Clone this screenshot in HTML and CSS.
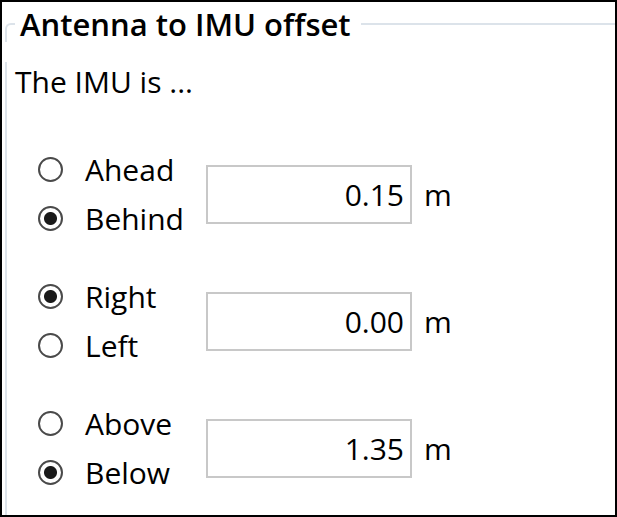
FILE: index.html
```html
<!doctype html>
<html lang="en">
    <head>
        <meta charset="UTF-8" />
        <title>Antenna to IMU offset</title>
        <link rel="stylesheet" href="styles.css">
    </head>
    <body>
        <div class="window">
            <div class="group">
                <div class="group-head">
                    <span class="group-title">Antenna to IMU offset</span>
                </div>
                <div class="group-body">
                    <div class="intro">The IMU is ...</div>

                    <div class="axis">
                        <div class="choices">
                            <label class="choice"><input type="radio" name="x" /> Ahead</label>
                            <label class="choice"><input type="radio" name="x" checked /> Behind</label>
                        </div>
                        <input class="value" type="text" value="0.15" />
                        <span class="unit">m</span>
                    </div>

                    <div class="axis">
                        <div class="choices">
                            <label class="choice"><input type="radio" name="y" checked /> Right</label>
                            <label class="choice"><input type="radio" name="y" /> Left</label>
                        </div>
                        <input class="value" type="text" value="0.00" />
                        <span class="unit">m</span>
                    </div>

                    <div class="axis">
                        <div class="choices">
                            <label class="choice"><input type="radio" name="z" /> Above</label>
                            <label class="choice"><input type="radio" name="z" checked /> Below</label>
                        </div>
                        <input class="value" type="text" value="1.35" />
                        <span class="unit">m</span>
                    </div>
                </div>
            </div>
        </div>
    </body>
</html>
```

FILE: styles.css
```css
html,
body {
    margin: 0;
    height: 100%;
    overflow: hidden;
}
body {
    font-family: "Open Sans", "Noto Sans", sans-serif;
    color: #000;
}
.window {
    height: 100%;
    box-sizing: border-box;
    border: 2px solid #000;
    background: #fff;
    overflow: hidden;
}
.group {
    margin: 4px 0 0 3px;
}
.group-head {
    display: flex;
    height: 36px;
}
.group-head::before {
    content: "";
    width: 8px;
    margin-top: 17px;
    border-top: 2px solid #dce3ea;
    border-left: 2px solid #dce3ea;
    border-top-left-radius: 6px;
}
.group-head::after {
    content: "";
    flex: 1;
    margin-top: 17px;
    border-top: 2px solid #dce3ea;
}
.group-title {
    padding: 0 10px 0 5px;
    font-size: 31px;
    font-weight: 600;
    line-height: 36px;
}
.group-body {
    border-left: 2px solid #dce3ea;
    padding-left: 8px;
    min-height: 480px;
}
.intro {
    font-size: 30px;
    line-height: 40px;
    margin-top: 20px;
}
.axis {
    display: flex;
    align-items: center;
    margin: 29px 0 0 23px;
}
.intro + .axis {
    margin-top: 43px;
}
.choices {
    width: 168px;
}
.choice {
    display: flex;
    align-items: center;
    gap: 22px;
    height: 49px;
    font-size: 30px;
}
.choice input {
    appearance: none;
    margin: 0;
    width: 25px;
    height: 25px;
    border: 2px solid #4a4a4a;
    border-radius: 50%;
    background: #fff;
}
.choice input:checked {
    background: radial-gradient(circle, #1a1a1a 0 6px, #fff 7px);
}
.value {
    width: 206px;
    height: 59px;
    box-sizing: border-box;
    border: 2px solid #c8c8c8;
    padding: 0 6px 0 0;
    font-family: inherit;
    font-size: 30px;
    text-align: right;
    color: #000;
    outline: none;
}
.unit {
    margin-left: 12px;
    font-size: 30px;
}
```
